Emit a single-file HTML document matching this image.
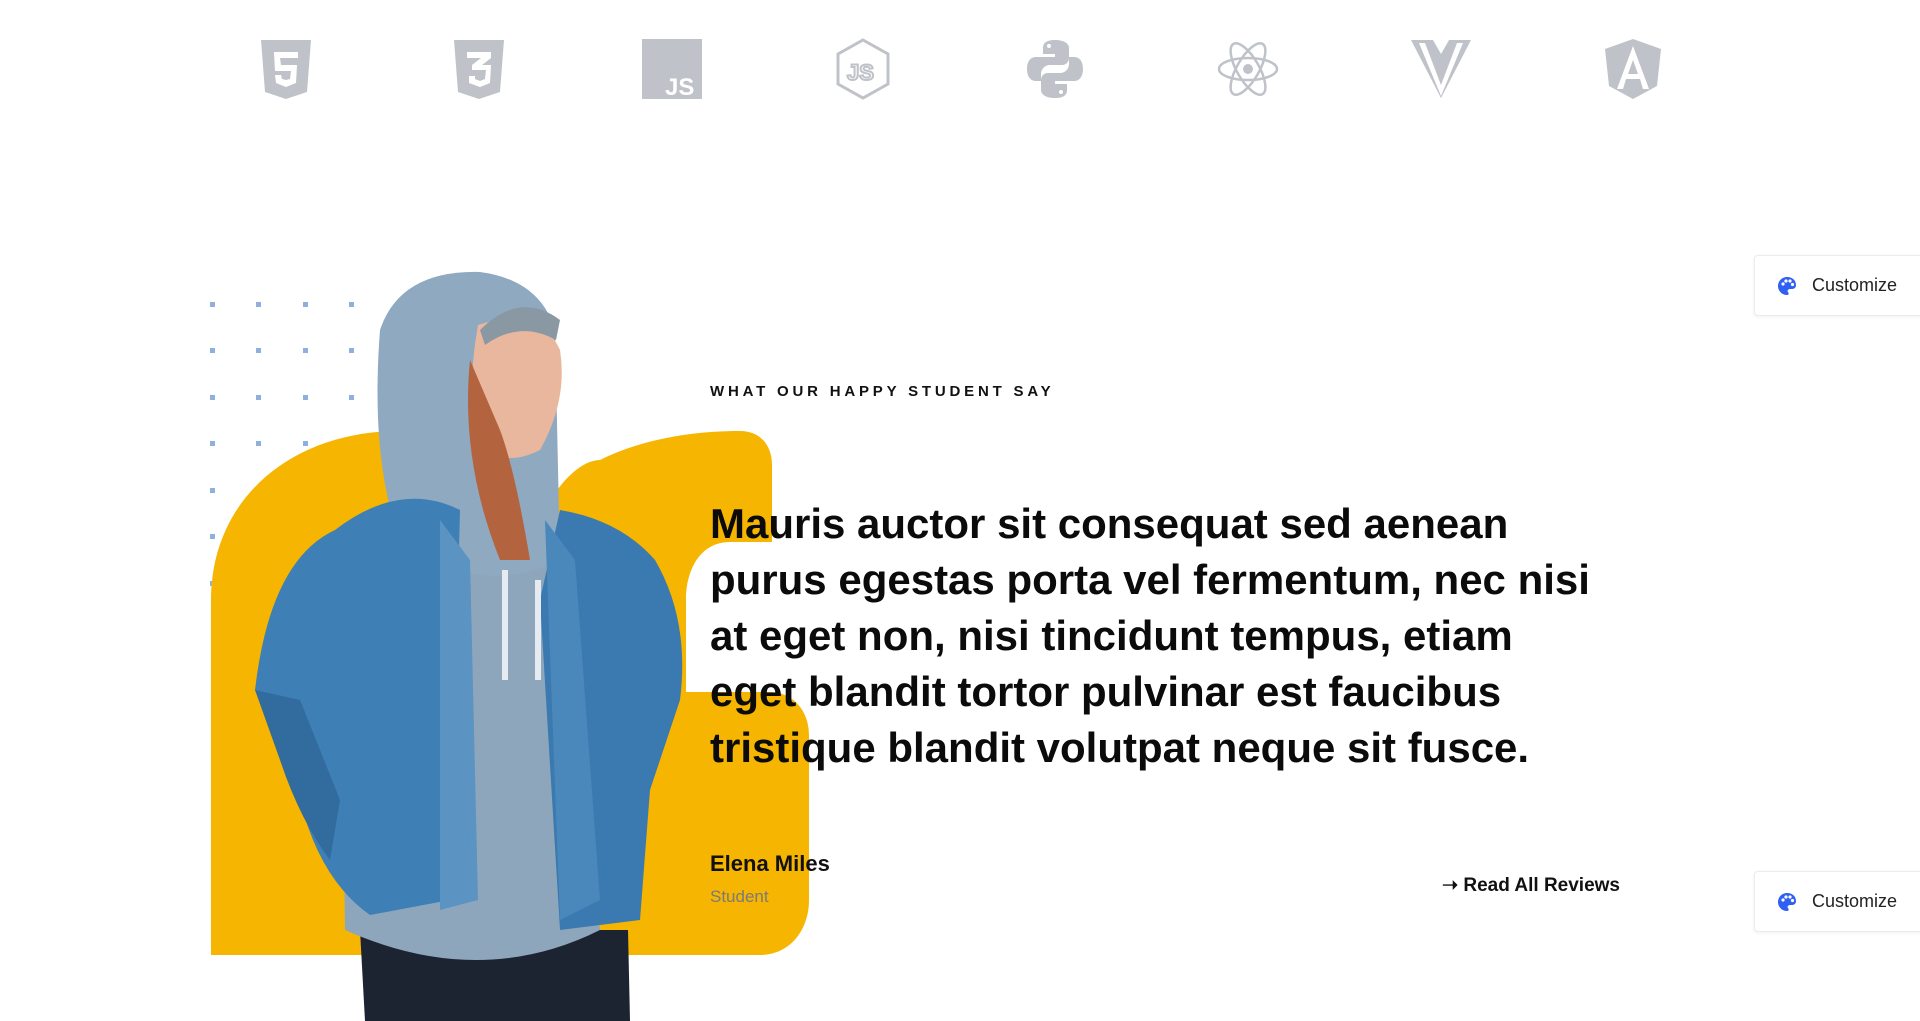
<!DOCTYPE html>
<html><head><meta charset="utf-8"><style>
*{margin:0;padding:0;box-sizing:border-box}
body{width:1920px;height:1021px;overflow:hidden;background:#fff;font-family:"Liberation Sans",sans-serif;position:relative}
.ic{position:absolute;top:38px;width:62px;height:62px}
.dot{position:absolute;width:5px;height:5px;background:#8fb0dc}
.cust{position:absolute;left:1754px;width:180px;height:61px;background:#fff;border:1px solid #ececec;border-radius:4px 0 0 4px;box-shadow:0 1px 4px rgba(0,0,0,.06);font-size:18px;color:#222}
.cust svg{position:absolute;left:22px;top:20px}
.cust span{position:absolute;left:57px;top:19px}
</style></head><body>

<svg class="ic" style="left:255px" viewBox="0 0 62 62"><path d="M6 2h50l-4 52-21 7-21-7z" fill="#bfc3c9"/><path d="M19 14h24v6H25l1 7h16l-1 18-10 4-10-4-1-8h6l1 4 4 1 4-1 1-8H20z" fill="#fff"/></svg>
<svg class="ic" style="left:448px" viewBox="0 0 62 62"><path d="M6 2h50l-4 52-21 7-21-7z" fill="#bfc3c9"/><path d="M19 14h24v6l-9 7h9l-1 18-10 4-11-4v-7h6v3l5 2 5-2 1-9H24v-5l9-7H19z" fill="#fff"/></svg>
<svg class="ic" style="left:641px" viewBox="0 0 62 62"><rect x="1" y="1" width="60" height="60" fill="#bfc3c9"/><text x="24" y="57" font-family="Liberation Sans" font-weight="bold" font-size="24" fill="#fff">JS</text></svg>
<svg class="ic" style="left:832px" viewBox="0 0 62 62"><path d="M31 2l25 14v30L31 60 6 46V16z" fill="none" stroke="#bfc3c9" stroke-width="3"/><text x="15" y="42" font-family="Liberation Sans" font-weight="bold" font-size="22" fill="none" stroke="#bfc3c9" stroke-width="2">JS</text></svg>
<svg class="ic" style="left:1024px" viewBox="0 0 62 62"><path d="M31 2c-10 0-12 4-12 8v6h12v3H12c-6 0-9 5-9 12s3 12 9 12h5v-7c0-5 4-9 9-9h12c4 0 7-3 7-7V10c0-4-4-8-14-8z" fill="#bfc3c9"/><path d="M31 60c10 0 12-4 12-8v-6H31v-3h19c6 0 9-5 9-12s-3-12-9-12h-5v7c0 5-4 9-9 9H24c-4 0-7 3-7 7v10c0 4 4 8 14 8z" fill="#bfc3c9"/><circle cx="25" cy="8" r="2" fill="#fff"/><circle cx="37" cy="54" r="2" fill="#fff"/></svg>
<svg class="ic" style="left:1217px" viewBox="0 0 62 62"><g fill="none" stroke="#bfc3c9" stroke-width="2.5"><ellipse cx="31" cy="31" rx="29" ry="11"/><ellipse cx="31" cy="31" rx="29" ry="11" transform="rotate(60 31 31)"/><ellipse cx="31" cy="31" rx="29" ry="11" transform="rotate(-60 31 31)"/></g><circle cx="31" cy="31" r="5" fill="#bfc3c9"/></svg>
<svg class="ic" style="left:1410px" viewBox="0 0 62 62"><path d="M1 2h22l8 14 8-14h22L31 60z" fill="#bfc3c9"/><path d="M9 5h6l16 42 16-42h6L31 58z" fill="#fff"/></svg>
<svg class="ic" style="left:1602px" viewBox="0 0 62 62"><path d="M31 1l28 10-4 37-24 13-24-13-4-37z" fill="#bfc3c9"/><path d="M31 8l-16 43h6l3-10h14l3 10h6zm-5 28l5-14 5 14z" fill="#fff"/></svg>

<div class="dot" style="left:210px;top:302px"></div><div class="dot" style="left:256px;top:302px"></div><div class="dot" style="left:303px;top:302px"></div><div class="dot" style="left:349px;top:302px"></div>
<div class="dot" style="left:210px;top:348px"></div><div class="dot" style="left:256px;top:348px"></div><div class="dot" style="left:303px;top:348px"></div><div class="dot" style="left:349px;top:348px"></div>
<div class="dot" style="left:210px;top:395px"></div><div class="dot" style="left:256px;top:395px"></div><div class="dot" style="left:303px;top:395px"></div><div class="dot" style="left:349px;top:395px"></div>
<div class="dot" style="left:210px;top:441px"></div><div class="dot" style="left:256px;top:441px"></div><div class="dot" style="left:303px;top:441px"></div>
<div class="dot" style="left:210px;top:488px"></div><div class="dot" style="left:256px;top:488px"></div>
<div class="dot" style="left:210px;top:534px"></div>
<div class="dot" style="left:210px;top:581px"></div>

<svg style="position:absolute;left:0;top:0" width="1920" height="1021" viewBox="0 0 1920 1021">
<path d="M211 955V600C211 500 290 431 400 431H500V955z" fill="#f6b500"/>
<path d="M500 955V700C500 560 560 460 600 460C640 440 690 431 740 431C760 431 772 445 772 465V542H730C700 542 686 570 686 600V692H770C792 692 809 710 809 735V900C809 930 790 955 760 955z" fill="#f6b500"/>
<path d="M360 930L365 1021H630L628 930z" fill="#1c2331"/>
<path d="M340 560Q420 520 560 560L600 930Q480 990 345 930z" fill="#8ea6bb"/>
<path d="M380 330Q400 270 480 272Q540 280 555 330L560 560Q480 600 400 540Q370 460 380 330z" fill="#8fa9c1"/>
<path d="M478 325Q540 305 560 350Q568 400 540 450Q500 470 480 440Q465 400 478 325z" fill="#e9b79e"/>
<path d="M480 330Q520 290 560 320L556 340Q520 320 485 345z" fill="#8a98a4"/>
<path d="M470 360Q460 460 500 560L530 560Q515 470 500 430z" fill="#b3643f"/>
<path d="M335 530Q400 480 460 510L450 900L370 915Q320 880 300 800L255 690Q270 560 335 530z" fill="#3e7fb6"/>
<path d="M560 510Q620 520 655 560Q690 620 680 700L650 790L640 920L560 930L540 600z" fill="#3a7ab0"/>
<path d="M440 520L470 560L478 900L440 910z" fill="#5b93c2"/>
<path d="M545 520L575 560L600 900L560 920z" fill="#4a87bb"/>
<path d="M255 690L280 760Q300 820 330 860L340 800L300 700z" fill="#326b9d"/>
<rect x="502" y="570" width="6" height="110" fill="#e5ebf0"/>
<rect x="535" y="580" width="6" height="100" fill="#e5ebf0"/>
</svg>

<div style="position:absolute;left:710px;top:383px;font-size:15px;font-weight:bold;letter-spacing:3.8px;color:#111">WHAT OUR HAPPY STUDENT SAY</div>
<div style="position:absolute;left:710px;top:496px;white-space:nowrap;font-size:42px;line-height:56px;font-weight:bold;color:#0b0b0b">Mauris auctor sit consequat sed aenean<br>purus egestas porta vel fermentum, nec nisi<br>at eget non, nisi tincidunt tempus, etiam<br>eget blandit tortor pulvinar est faucibus<br>tristique blandit volutpat neque sit fusce.</div>
<div style="position:absolute;left:710px;top:851px;font-size:22px;font-weight:bold;color:#111">Elena Miles</div>
<div style="position:absolute;left:710px;top:887px;font-size:17px;color:#7a7a7a">Student</div>
<div style="position:absolute;right:300px;top:874px;font-size:19px;font-weight:bold;color:#111">&#10141; Read All Reviews</div>

<div class="cust" style="top:255px"><svg width="20" height="20" viewBox="0 0 20 20"><path d="M10 1C5 1 1 5 1 10s4 9 9 9c2 0 2-2 1-3s0-3 2-3h2c3 0 4-2 4-4C19 4 15 1 10 1z" fill="#2f5ff3"/><circle cx="6" cy="8" r="1.6" fill="#fff"/><circle cx="9" cy="5" r="1.6" fill="#fff"/><circle cx="13" cy="5" r="1.6" fill="#fff"/><circle cx="15.5" cy="8.5" r="1.6" fill="#fff"/></svg><span>Customize</span></div>
<div class="cust" style="top:871px"><svg width="20" height="20" viewBox="0 0 20 20"><path d="M10 1C5 1 1 5 1 10s4 9 9 9c2 0 2-2 1-3s0-3 2-3h2c3 0 4-2 4-4C19 4 15 1 10 1z" fill="#2f5ff3"/><circle cx="6" cy="8" r="1.6" fill="#fff"/><circle cx="9" cy="5" r="1.6" fill="#fff"/><circle cx="13" cy="5" r="1.6" fill="#fff"/><circle cx="15.5" cy="8.5" r="1.6" fill="#fff"/></svg><span>Customize</span></div>
</body></html>
